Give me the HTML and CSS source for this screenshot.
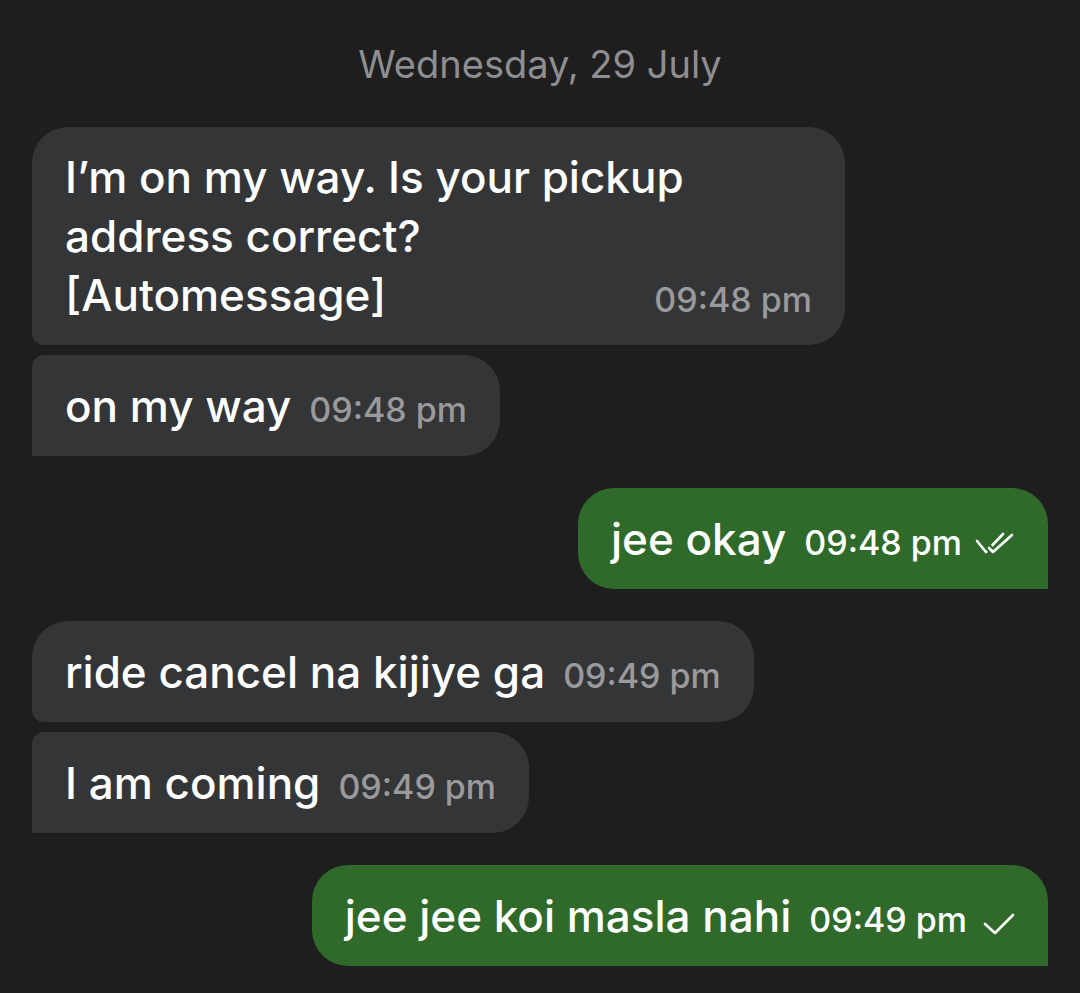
FILE: index.html
```html
<!DOCTYPE html>
<html>

<head>
  <title>Chat</title>
  <link rel="stylesheet" href="styles.css">
</head>

<body>
  <div id="chat">
    <div class="date">Wednesday, 29 July</div>

    <div class="group in">
      <div class="msg first">I’m on my way. Is your pickup address correct?<br>[Automessage]<span class="time float">09:48 pm</span></div>
      <div class="msg last">on my way<span class="time">09:48 pm</span></div>
    </div>

    <div class="group out">
      <div class="msg single">jee okay<span class="time">09:48 pm</span><svg class="tick" width="40" height="24" viewBox="0 0 40 24">
          <path d="M2 9 L11 20 L28 2" fill="none" stroke="#fff" stroke-width="2.6" stroke-linecap="round" stroke-linejoin="round"/>
          <path d="M14 16 L18 20 L37 3" fill="none" stroke="#2f6a2b" stroke-width="7" stroke-linecap="round" stroke-linejoin="round"/>
          <path d="M14 16 L18 20 L37 3" fill="none" stroke="#fff" stroke-width="2.6" stroke-linecap="round" stroke-linejoin="round"/>
        </svg></div>
    </div>

    <div class="group in">
      <div class="msg first">ride cancel na kijiye ga<span class="time">09:49 pm</span></div>
      <div class="msg last">I am coming<span class="time">09:49 pm</span></div>
    </div>

    <div class="group out">
      <div class="msg single">jee jee koi masla nahi<span class="time">09:49 pm</span><svg class="tick single-tick" width="32" height="24" viewBox="0 0 32 24">
          <path d="M2 13 L12 22 L30 4" fill="none" stroke="#fff" stroke-width="2.6" stroke-linecap="round" stroke-linejoin="round"/>
        </svg></div>
    </div>
  </div>
</body>

</html>
```

FILE: styles.css
```css
html, body {
  margin: 0;
  padding: 0;
  background: #1e1e1f;
  font-family: Inter, "Noto Sans", sans-serif;
  color: #ffffff;
}
#chat {
  display: flex;
  flex-direction: column;
  padding: 0 32px;
}
.date {
  margin-top: 43px;
  margin-bottom: 42px;
  line-height: 42px;
  font-size: 38px;
  text-align: center;
  color: #8e8e91;
}
.group {
  display: flex;
  flex-direction: column;
  gap: 10px;
  margin-bottom: 32px;
}
.group.in {
  align-items: flex-start;
}
.group.out {
  align-items: flex-end;
}
.msg {
  max-width: 747px;
  padding: 21px 33px 20px;
  font-size: 44px;
  font-weight: 500;
  line-height: 60px;
  border-radius: 36px;
}
.in .msg {
  background: #343537;
}
.out .msg {
  background: #2f6a2b;
}
.in .msg.first {
  border-bottom-left-radius: 12px;
}
.in .msg.first:has(.float) {
  line-height: 59px;
  padding-bottom: 20px;
}
.in .msg.last {
  border-top-left-radius: 12px;
  border-bottom-left-radius: 0;
}
.out .msg.single {
  border-bottom-right-radius: 0;
}
.time {
  margin-left: 18px;
  font-size: 34px;
  font-weight: 500;
  line-height: 1;
  color: #9a9a9d;
}
.out .time {
  color: #ffffff;
}
.time.float {
  float: right;
  line-height: 59px;
  position: relative;
  top: 4px;
}
.tick {
  margin-left: 13px;
  vertical-align: -1px;
}
.single-tick {
  margin-left: 16px;
  vertical-align: -3px;
}
```
